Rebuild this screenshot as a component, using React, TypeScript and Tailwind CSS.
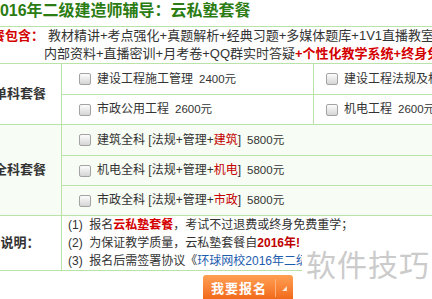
const line = 'border-[#b9e3a9]';

const Checkbox = () => (
  <span className="inline-block w-[12px] h-[12px] rounded-[2px] border border-[#a3a3a3] bg-linear-to-b from-[#fcfcfc] to-[#d5d5d5] shrink-0" />
);

const Item = ({ children, pad }: { children: React.ReactNode; pad: string }) => (
  <div className={`flex items-center gap-[6px] whitespace-nowrap ${pad}`}>
    <Checkbox />
    <span>{children}</span>
  </div>
);

const Price = ({ v }: { v: string }) => <span className="ml-[6px] text-[11.5px]">{v}</span>;

const App = () => {
  return (
    <div className="w-[432px] h-[299px] overflow-hidden relative bg-white text-[#333] font-['Liberation_Sans','Noto_Sans_CJK_SC',sans-serif]">
      <div className="w-[600px] -ml-[21px]">
        {/* 标题 */}
        <div className="h-[26px] pt-[1px] pl-[12px] leading-[20px] text-[16px] font-bold text-[#2b7c12] whitespace-nowrap">
          2016年二级建造师辅导：云私塾套餐
        </div>

        {/* 套餐包含 */}
        <div className={`flex border-t ${line} text-[13px] leading-[18px] whitespace-nowrap`}>
          <div className="w-[65px] shrink-0 font-bold text-[#d40000]">套餐包含：</div>
          <div className="flex-1">
            <div className="pl-[4px]">教材精讲+考点强化+真题解析+经典习题+多媒体题库+1V1直播教室+在线模考</div>
            <div>
              内部资料+直播密训+月考卷+QQ群实时答疑
              <span className="font-bold text-[#d40000]">+个性化教学系统+终身免费重学</span>
            </div>
          </div>
        </div>

        {/* 单科套餐 */}
        <div className={`flex border-t ${line} text-[12px]`}>
          <div className="w-[82px] shrink-0 flex items-center justify-center font-bold text-[13px]">单科套餐</div>
          <div className={`flex-1 border-l ${line}`}>
            <div className="flex h-[30px]">
              <div className="w-[251px] flex items-center">
                <Item pad="pl-[17px]">建设工程施工管理<Price v="2400元" /></Item>
              </div>
              <div className={`flex-1 flex items-center border-l ${line}`}>
                <Item pad="pl-[12px]">建设工程法规及相关知识<Price v="2400元" /></Item>
              </div>
            </div>
            <div className={`flex h-[30px] border-t ${line}`}>
              <div className="w-[251px] flex items-center">
                <Item pad="pl-[17px]">市政公用工程<Price v="2600元" /></Item>
              </div>
              <div className={`flex-1 flex items-center border-l ${line}`}>
                <Item pad="pl-[12px]">机电工程<Price v="2600元" /></Item>
              </div>
            </div>
          </div>
        </div>

        {/* 全科套餐 */}
        <div className={`flex border-t ${line} bg-[#f7fcf4] text-[12px]`}>
          <div className="w-[82px] shrink-0 flex items-center justify-center font-bold text-[13px]">全科套餐</div>
          <div className={`flex-1 border-l ${line}`}>
            {[
              ['建筑全科', '建筑'],
              ['机电全科', '机电'],
              ['市政全科', '市政'],
            ].map(([name, sub], i) => (
              <div key={name} className={`flex items-center h-[30px] ${i > 0 ? `border-t ${line}` : ''}`}>
                <Item pad="pl-[17px]">
                  {name} [法规+管理+<span className="text-[#c40000]">{sub}</span>]<Price v="5800元" />
                </Item>
              </div>
            ))}
          </div>
        </div>

        {/* 说明 */}
        <div className={`flex border-y ${line} text-[12px] leading-[18px]`}>
          <div className="w-[82px] shrink-0 flex items-center justify-center font-bold text-[13px]">说明：</div>
          <div className={`flex-1 border-l ${line} pl-[6px] whitespace-nowrap`}>
            <div>
              (1)&nbsp; 报名<span className="font-bold text-[#d40000]">云私塾套餐</span>，考试不过退费或终身免费重学；
            </div>
            <div className="w-[234px] overflow-hidden">
              (2)&nbsp; 为保证教学质量，云私塾套餐自<span className="font-bold text-[#c00000]">2016年!</span>
            </div>
            <div className="w-[234px] overflow-hidden">
              (3)&nbsp; 报名后需签署协议《<span className="text-[#1c5cae]">环球网校2016年二级建造师云私塾协议</span>》
            </div>
          </div>
        </div>

        {/* 按钮 */}
        <div className="mt-[4px] ml-[224px] w-[90px] h-[26px] rounded-[3px] bg-linear-to-b from-[#ffa053] to-[#f0640f] flex items-center text-white">
          <span className="w-[72px] text-center text-[13px] font-bold tracking-[1px] font-['Noto_Sans_CJK_SC',sans-serif]">我要报名</span>
          <span className="h-[18px] border-l border-[#ffb27a]" />
          <svg className="ml-[6px]" width="5" height="5" viewBox="0 0 5 5">
            <path d="M5 0 L5 5 L0 5 Z" fill="#ffe2cc" />
          </svg>
        </div>
      </div>

      {/* 水印 */}
      <div className="absolute left-[302px] top-[238px] w-[130px] h-[61px] bg-white flex items-start pt-[7px] pl-[4px] text-[30px] leading-[36px] text-[#cbcbcb] font-['Noto_Sans_CJK_SC',sans-serif] tracking-[1px]">
        软件技巧
      </div>
    </div>
  );
};

export default App;
